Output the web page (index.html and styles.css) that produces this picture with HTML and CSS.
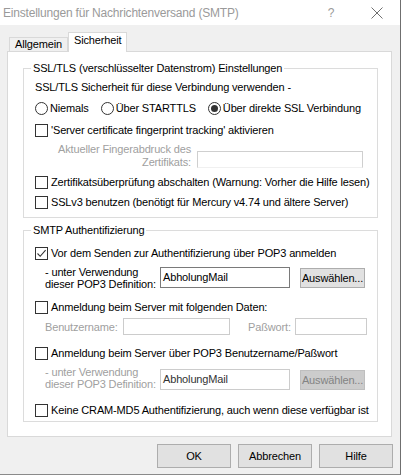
FILE: index.html
```html
<!DOCTYPE html>
<html>
	<head>
		<title>Einstellungen für Nachrichtenversand (SMTP)</title>
		<meta charset="UTF-8"/>
		<link rel="stylesheet" href="styles.css">
	</head>
	<body>
		<div class="dlg">

		  <div class="titlebar">
			<span class="title">Einstellungen für Nachrichtenversand (SMTP)</span>
			<span class="help-btn">?</span>
			<span class="close-btn">
			  <svg width="12" height="12" viewBox="0 0 12 12"><path d="M0.5 0.5 L11.5 11.5 M11.5 0.5 L0.5 11.5" stroke="#6f6f6f" stroke-width="1" fill="none"/></svg>
			</span>
		  </div>

		  <div class="tabs">
			<span class="tab">Allgemein</span>
			<span class="tab active">Sicherheit</span>
		  </div>

		  <div class="panel">

			<fieldset class="group group-ssl">
			  <legend>SSL/TLS (verschlüsselter Datenstrom) Einstellungen</legend>

			  <div class="row">SSL/TLS Sicherheit für diese Verbindung verwenden -</div>

			  <div class="row row-tall">
				<span class="radio-item"><span class="radio"></span>Niemals</span>
				<span class="radio-item"><span class="radio"></span>Über STARTTLS</span>
				<span class="radio-item"><span class="radio checked"></span>Über direkte SSL Verbindung</span>
			  </div>

			  <div class="row row-tall"><span class="cb"></span>'Server certificate fingerprint tracking' aktivieren</div>

			  <div class="fp">
				<div class="fp-label">Aktueller Fingerabdruck des<br>Zertifikats:</div>
				<div class="fp-input"></div>
			  </div>

			  <div class="row"><span class="cb"></span>Zertifikatsüberprüfung abschalten (Warnung: Vorher die Hilfe lesen)</div>
			  <div class="row"><span class="cb"></span>SSLv3 benutzen (benötigt für Mercury v4.74 und ältere Server)</div>
			</fieldset>

			<fieldset class="group group-auth">
			  <legend>SMTP Authentifizierung</legend>

			  <div class="row">
				<span class="cb"><svg width="11" height="11" viewBox="0 0 11 11"><path d="M1.5 5.5 L4.2 8.3 L9.6 2.2" stroke="#333" stroke-width="1.1" fill="none"/></svg></span>Vor dem Senden zur Authentifizierung über POP3 anmelden
			  </div>

			  <div class="def">
				<div class="def-label">- unter Verwendung<br>dieser POP3 Definition:</div>
				<div class="edit">AbholungMail</div>
				<div class="btn-small">Auswählen...</div>
			  </div>

			  <div class="row"><span class="cb"></span>Anmeldung beim Server mit folgenden Daten:</div>

			  <div class="login">
				<span class="login-user">Benutzername:</span>
				<span class="edit edit-off edit-user"></span>
				<span class="login-pass">Paßwort:</span>
				<span class="edit edit-off edit-pass"></span>
			  </div>

			  <div class="row"><span class="cb"></span>Anmeldung beim Server über POP3 Benutzername/Paßwort</div>

			  <div class="def def-off">
				<div class="def-label">- unter Verwendung<br>dieser POP3 Definition:</div>
				<div class="edit edit-off">AbholungMail</div>
				<div class="btn-small">Auswählen...</div>
			  </div>

			  <div class="row"><span class="cb"></span>Keine CRAM-MD5 Authentifizierung, auch wenn diese verfügbar ist</div>
			</fieldset>

		  </div>

		  <div class="buttons">
			<span class="btn">OK</span>
			<span class="btn">Abbrechen</span>
			<span class="btn">Hilfe</span>
		  </div>

		</div>
	</body>
</html>
```

FILE: styles.css
```css
body {
  margin: 0;
  background: #fff;
  font-family: "Liberation Sans", Arial, sans-serif;
  font-size: 11px;
  letter-spacing: -0.15px;
  color: #000;
}

.dlg {
  width: 400px;
  height: 474px;
  background: #f0f0f0;
  border-right: 1px solid #6f6f6f;
  border-bottom: 1px solid #8a8a8a;
}

/* title bar */
.titlebar {
  display: flex;
  align-items: center;
  height: 25px;
  background: #fff;
}

.title {
  flex: 1;
  padding-left: 3px;
  font-size: 12px;
  letter-spacing: -0.2px;
  color: #9a9a9a;
}

.help-btn {
  width: 30px;
  margin-right: 8px;
  text-align: center;
  font-size: 12px;
  color: #9a9a9a;
}

.close-btn {
  display: flex;
  justify-content: center;
  width: 46px;
}

/* tabs */
.tabs {
  display: flex;
  align-items: flex-end;
  height: 26px;
  padding-left: 9px;
}

.tab {
  box-sizing: border-box;
  height: 14px;
  padding: 0 5px;
  line-height: 13px;
  border: 1px solid #d9d9d9;
  border-bottom: none;
}

.tab.active {
  position: relative;
  z-index: 1;
  height: 20px;
  margin-bottom: -1px;
  padding: 1px 5px 0 5px;
  background: #fff;
}

.panel {
  box-sizing: border-box;
  width: 385px;
  height: 386px;
  margin-left: 7px;
  padding: 10px 13px 0 15px;
  background: #fff;
  border: 1px solid #d9d9d9;
}

/* group boxes */
.group {
  margin: 0;
  padding: 2px 0 5px 11px;
  border: 1px solid #dcdcdc;
  min-width: 0;
}

.group legend {
  margin-left: -4px;
  padding: 0 2px;
  line-height: 13px;
}

.group-auth {
  margin-top: 6px;
  padding: 6px 0 1px 11px;
}

.row {
  display: flex;
  align-items: center;
  height: 20px;
  white-space: nowrap;
}

.row-tall {
  height: 22px;
}

.cb {
  display: flex;
  align-items: center;
  justify-content: center;
  box-sizing: border-box;
  flex: none;
  width: 13px;
  height: 13px;
  margin-right: 3px;
  border: 1px solid #333;
  background: #fff;
}

.radio-item {
  display: flex;
  align-items: center;
  margin-right: 12px;
}

.radio {
  display: flex;
  align-items: center;
  justify-content: center;
  box-sizing: border-box;
  width: 13px;
  height: 13px;
  margin-right: 2px;
  border: 1px solid #333;
  border-radius: 50%;
}

.radio.checked::after {
  content: "";
  width: 7px;
  height: 7px;
  border-radius: 50%;
  background: #333;
}

/* fingerprint */
.fp {
  display: flex;
  height: 31px;
}

.fp-label {
  width: 156px;
  padding-top: 2px;
  text-align: right;
  line-height: 13px;
  color: #a0a0a0;
}

.fp-input {
  box-sizing: border-box;
  width: 166px;
  height: 17px;
  margin: 10px 0 0 6px;
  border: 1px solid #cfcfcf;
  border-bottom-color: #f0f0f0;
}

/* pop3 definition */
.def {
  display: flex;
  align-items: flex-start;
  height: 34px;
}

.def-label {
  box-sizing: border-box;
  width: 125px;
  padding: 3px 0 0 10px;
  line-height: 12px;
}

.edit {
  box-sizing: border-box;
  width: 130px;
  height: 21px;
  margin-top: 4px;
  padding-left: 2px;
  line-height: 19px;
  border: 1px solid #7a7a7a;
  background: #fff;
}

.btn-small {
  box-sizing: border-box;
  width: 65px;
  height: 20px;
  margin: 5px 0 0 10px;
  line-height: 18px;
  text-align: center;
  background: #e1e1e1;
  border: 1px solid #adadad;
}

.def-off {
  height: 37px;
}

.def-off .def-label {
  color: #a0a0a0;
}

.def-off .edit {
  margin-top: 6px;
}

.def-off .btn-small {
  margin-top: 7px;
  color: #838383;
  background: #cccccc;
  border-color: #bfbfbf;
}

.edit-off {
  border-color: #cccccc;
  color: #333;
}

/* login */
.login {
  display: flex;
  align-items: center;
  height: 17px;
  padding: 1px 0 8px 0;
  color: #a0a0a0;
}

.login-user {
  width: 78px;
  padding-left: 10px;
}

.edit-user {
  width: 107px;
  height: 17px;
  margin: 0;
}

.login-pass {
  width: 47px;
  margin-left: 18px;
}

.edit-pass {
  width: 72px;
  height: 17px;
  margin: 0;
}

/* dialog buttons */
.buttons {
  display: flex;
  gap: 7px;
  padding: 7px 0 0 157px;
}

.btn {
  box-sizing: border-box;
  width: 74px;
  height: 24px;
  line-height: 22px;
  text-align: center;
  background: #e1e1e1;
  border: 1px solid #adadad;
}
```
